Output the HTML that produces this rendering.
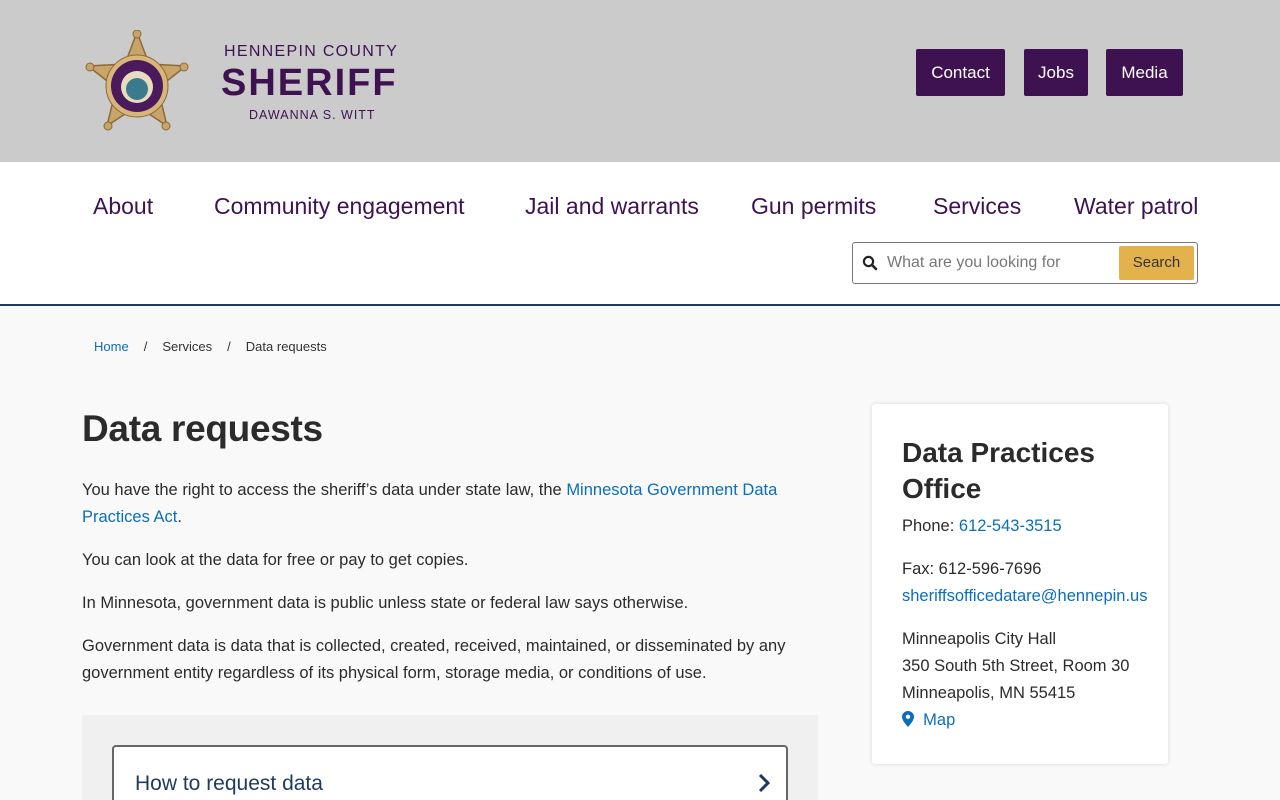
<!DOCTYPE html>
<html><head><meta charset="utf-8"><style>
*{box-sizing:border-box;margin:0;padding:0}
html,body{width:1280px;height:800px;overflow:hidden}
body{background:#f9f9f9;font-family:"Liberation Sans",sans-serif;color:#2b2b2b;position:relative}
.top{height:162px;background:#cbcbcb;position:relative}
.btn{position:absolute;top:49px;height:47px;background:#3e1251;color:#fff;font-size:17px;line-height:47px;text-align:center;border-radius:2px}
.nav{height:144px;background:#fff;border-bottom:2px solid #1d3a5f;position:relative}
.nav a{position:absolute;top:31px;font-size:23px;color:#3e1251;text-decoration:none}
a{color:#0a6ebd;text-decoration:none}
p{font-size:16.5px;line-height:27px;letter-spacing:0}
</style></head><body>
<div class="top">
<svg style="position:absolute;left:84px;top:30px" width="106" height="102" viewBox="0 0 106 102">
<polygon points="53,2 65,34 102,36 74,58 83,96 53,76 23,96 32,58 4,36 41,34" fill="#c9a469" stroke="#8a6a3a" stroke-width="1.5"/>
<circle cx="53" cy="4" r="4" fill="#c9a469" stroke="#8a6a3a"/><circle cx="100" cy="37" r="4" fill="#c9a469" stroke="#8a6a3a"/><circle cx="6" cy="37" r="4" fill="#c9a469" stroke="#8a6a3a"/><circle cx="82" cy="96" r="4" fill="#c9a469" stroke="#8a6a3a"/><circle cx="24" cy="96" r="4" fill="#c9a469" stroke="#8a6a3a"/>
<circle cx="53" cy="56" r="31" fill="#d8b57a" stroke="#8a6a3a"/>
<circle cx="53" cy="56" r="26" fill="#4a1a5a"/><circle cx="53" cy="57" r="16" fill="#e7dcc0"/><circle cx="53" cy="59" r="11" fill="#3b7a8c"/>
</svg>
<div style="position:absolute;left:224px;top:43px;font-size:16px;letter-spacing:1.3px;color:#3e1251">HENNEPIN COUNTY</div>
<div style="position:absolute;left:221px;top:62px;font-size:38px;font-weight:bold;letter-spacing:2px;color:#3e1251">SHERIFF</div>
<div style="position:absolute;left:249px;top:108px;font-size:12.5px;letter-spacing:1px;color:#3e1251">DAWANNA S. WITT</div>
<div class="btn" style="left:916px;width:89px">Contact</div>
<div class="btn" style="left:1024px;width:64px">Jobs</div>
<div class="btn" style="left:1106px;width:77px">Media</div>
</div>
<div class="nav">
<a style="left:93px">About</a><a style="left:214px">Community engagement</a><a style="left:525px">Jail and warrants</a><a style="left:751px">Gun permits</a><a style="left:933px">Services</a><a style="left:1074px">Water patrol</a>
<div style="position:absolute;left:852px;top:80px;width:346px;height:42px;border:1px solid #777;border-radius:3px;background:#fff">
<svg style="position:absolute;left:9px;top:12px" width="16" height="16" viewBox="0 0 16 16"><circle cx="6.5" cy="6.5" r="4.6" fill="none" stroke="#222" stroke-width="2.2"/><line x1="10" y1="10" x2="14" y2="14" stroke="#222" stroke-width="2.6" stroke-linecap="round"/></svg>
<span style="position:absolute;left:34px;top:11px;font-size:16px;color:#777">What are you looking for</span>
<div style="position:absolute;right:3px;top:3px;width:75px;height:34px;background:#e3b24c;border-radius:2px;font-size:15px;line-height:34px;text-align:center;color:#333">Search</div>
</div>
</div>
<div style="position:absolute;top:339px;left:94px;font-size:13px;color:#333"><a>Home</a><span style="margin:0 15px 0 15px">/</span>Services<span style="margin:0 15px 0 15px">/</span>Data requests</div>
<h1 style="position:absolute;left:82px;top:408px;font-size:37px;font-weight:bold;color:#2b2b2b;letter-spacing:-.3px">Data requests</h1>
<div style="position:absolute;left:82px;top:477px;width:730px">
<p>You have the right to access the sheriff’s data under state law, the <a>Minnesota Government Data Practices Act</a>.</p>
<p style="margin-top:16px">You can look at the data for free or pay to get copies.</p>
<p style="margin-top:16px">In Minnesota, government data is public unless state or federal law says otherwise.</p>
<p style="margin-top:16px">Government data is data that is collected, created, received, maintained, or disseminated by any government entity regardless of its physical form, storage media, or conditions of use.</p>
</div>
<div style="position:absolute;left:82px;top:715px;width:736px;height:85px;background:#f0f0f0;overflow:hidden">
<div style="position:absolute;left:30px;top:30px;width:676px;height:70px;background:#fff;border:2px solid #666;border-radius:4px">
<span style="position:absolute;left:21px;top:25px;font-size:21px;color:#1d3a5f">How to request data</span>
<svg style="position:absolute;right:16px;top:26px" width="12" height="20" viewBox="0 0 12 20"><path d="M2 2 L10 10 L2 18" fill="none" stroke="#1d3a5f" stroke-width="3"/></svg>
</div></div>
<div style="position:absolute;left:872px;top:404px;width:296px;height:360px;background:#fff;box-shadow:0 0 4px rgba(0,0,0,.15);border-radius:3px;padding:31px 30px">
<div style="font-size:28px;font-weight:bold;line-height:36px;color:#2b2b2b">Data Practices Office</div>
<p style="margin-top:6px">Phone: <a>612-543-3515</a></p>
<p style="margin-top:16px">Fax: 612-596-7696<br><a>sheriffsofficedatare@hennepin.us</a></p>
<p style="margin-top:16px">Minneapolis City Hall<br>350 South 5th Street, Room 30<br>Minneapolis, MN 55415<br><a><svg width="12" height="16" viewBox="0 0 12 16" style="vertical-align:-2px"><path d="M6 0C2.7 0 0 2.6 0 5.8 0 10 6 16 6 16s6-6 6-10.2C12 2.6 9.3 0 6 0z" fill="#0a6ebd"/><circle cx="6" cy="5.8" r="2.2" fill="#fff"/></svg>&nbsp; Map</a></p>
</div>
</body></html>
